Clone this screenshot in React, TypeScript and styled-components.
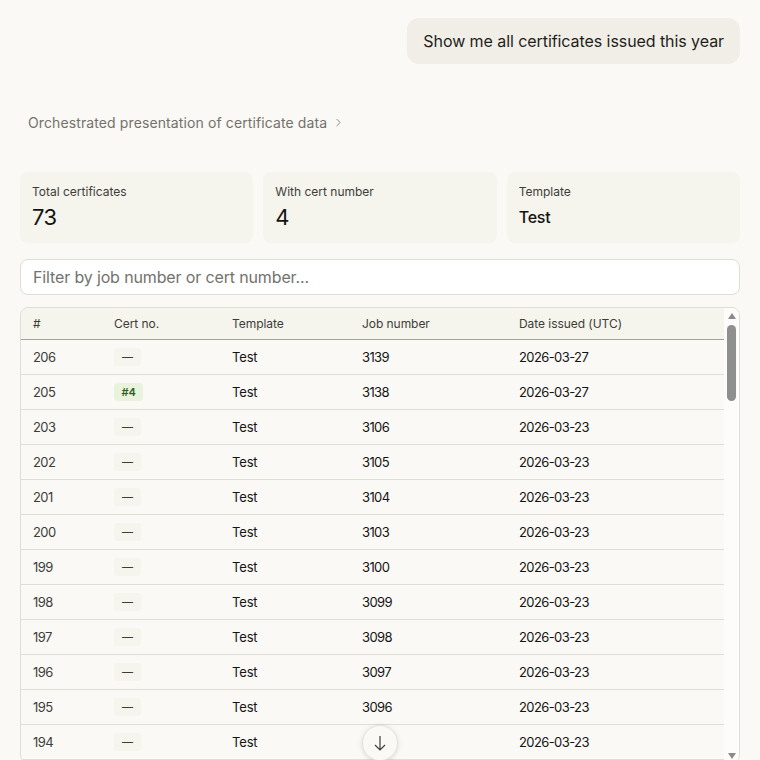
import React from "react";
import styled, { createGlobalStyle } from "styled-components";
import { ChevronRight } from "lucide-react";

const GlobalStyle = createGlobalStyle`
  html, body {
    margin: 0;
    height: 760px;
    overflow: hidden;
    background: #faf9f5;
    font-family: Inter, "Noto Sans", sans-serif;
    color: #1f1e1d;
  }
  * {
    box-sizing: border-box;
  }
`;

const Page = styled.div`
  height: 760px;
  padding: 18px 20px 0;
  display: flex;
  flex-direction: column;
  overflow: hidden;

  & > * {
    flex: none;
  }
`;

const Bubble = styled.div`
  align-self: flex-end;
  height: 46px;
  padding: 0 16px;
  display: flex;
  align-items: center;
  background: #f0eee6;
  border-radius: 12px;
  font-size: 16px;
  letter-spacing: -0.07px;
`;

const Summary = styled.div`
  margin: 48px 0 0 8px;
  height: 20px;
  display: flex;
  align-items: center;
  gap: 5px;
  font-size: 14px;
  letter-spacing: 0.11px;
  color: #73726c;
`;

const Stats = styled.div`
  margin-top: 40px;
  display: grid;
  grid-template-columns: repeat(3, 1fr);
  gap: 10px;
`;

const Stat = styled.div`
  height: 71px;
  padding: 12px 12px 0;
  background: #f5f4ed;
  border-radius: 8px;
`;

const StatLabel = styled.div`
  font-size: 12px;
  line-height: 16px;
  letter-spacing: 0;
  color: #3d3d3a;
`;

const StatValue = styled.div<{ $small?: boolean }>`
  margin-top: 4px;
  height: 26px;
  line-height: 26px;
  font-size: ${(p) => (p.$small ? "16px" : "22px")};
  font-weight: ${(p) => (p.$small ? 500 : 400)};
  letter-spacing: ${(p) => (p.$small ? "-0.2px" : "-0.6px")};
  color: #141413;
`;

const Filter = styled.input`
  margin-top: 16px;
  width: 100%;
  height: 36px;
  padding: 0 12px;
  background: #fff;
  border: 1px solid #deddd6;
  border-radius: 8px;
  outline: none;
  font: inherit;
  font-size: 16px;
  letter-spacing: -0.14px;

  &::placeholder {
    color: #73726c;
    opacity: 1;
  }
`;

const TableFrame = styled.div`
  position: relative;
  margin-top: 12px;
  height: 456px;
  display: flex;
  border: 1px solid #deddd6;
  border-radius: 8px;
  overflow: hidden;
`;

const TableArea = styled.div`
  flex: 1;
  min-width: 0;
  overflow: hidden;
`;

const Table = styled.table`
  width: 100%;
  table-layout: fixed;
  border-collapse: collapse;
  font-size: 13px;
`;

const HeadCell = styled.th`
  height: 31px;
  padding: 0 12px;
  text-align: left;
  font-size: 12px;
  font-weight: 400;
  letter-spacing: -0.05px;
  color: #3d3d3a;
  background: #f5f4ed;
  border-bottom: 1px solid #a3a29b;
`;

const Row = styled.tr`
  height: 35px;
  border-bottom: 1px solid #deddd6;
`;

const Cell = styled.td<{ $muted?: boolean; $numeric?: boolean }>`
  padding: 0 12px;
  letter-spacing: ${(p) => (p.$numeric ? "-0.6px" : "-0.15px")};
  color: ${(p) => (p.$muted ? "#3d3d3a" : "#141413")};
`;

const Pill = styled.span<{ $green?: boolean }>`
  display: inline-flex;
  align-items: center;
  justify-content: center;
  height: 18px;
  min-width: 27px;
  padding: 0 7.5px;
  border-radius: 4px;
  vertical-align: middle;
  font-size: 11px;
  font-weight: ${(p) => (p.$green ? 600 : 400)};
  letter-spacing: 0;
  background: ${(p) => (p.$green ? "#e8f2dc" : "#f5f4ed")};
  color: ${(p) => (p.$green ? "#2f5d1f" : "#3d3d3a")};
`;

const Track = styled.div`
  width: 15px;
  flex: none;
  display: flex;
  flex-direction: column;
  align-items: center;
  background: #fdfcfa;
  padding-top: 5px;
`;

const ArrowUp = styled.div`
  width: 0;
  height: 0;
  border-left: 4.5px solid transparent;
  border-right: 4.5px solid transparent;
  border-bottom: 6px solid #8a8a8a;
`;

const ArrowDownMark = styled(ArrowUp)`
  margin-top: auto;
  margin-bottom: 3px;
  border-bottom: none;
  border-top: 6px solid #8a8a8a;
`;

const Thumb = styled.div`
  margin-top: 6px;
  width: 9px;
  height: 76px;
  border-radius: 5px;
  background: #8f8f8f;
`;

const ScrollButton = styled.button`
  position: absolute;
  left: 341px;
  top: 417px;
  width: 36px;
  height: 36px;
  padding: 0;
  display: flex;
  align-items: center;
  justify-content: center;
  background: #faf9f5;
  color: #3d3d3a;
  border: 1px solid #e4e3dc;
  border-radius: 50%;
  box-shadow: 0 1px 5px rgba(0, 0, 0, 0.12);
`;

type Certificate = {
  id: number;
  cert?: string;
  job: number;
  date: string;
};

const certificates: Certificate[] = [
  { id: 206, job: 3139, date: "2026-03-27" },
  { id: 205, cert: "#4", job: 3138, date: "2026-03-27" },
  { id: 203, job: 3106, date: "2026-03-23" },
  { id: 202, job: 3105, date: "2026-03-23" },
  { id: 201, job: 3104, date: "2026-03-23" },
  { id: 200, job: 3103, date: "2026-03-23" },
  { id: 199, job: 3100, date: "2026-03-23" },
  { id: 198, job: 3099, date: "2026-03-23" },
  { id: 197, job: 3098, date: "2026-03-23" },
  { id: 196, job: 3097, date: "2026-03-23" },
  { id: 195, job: 3096, date: "2026-03-23" },
  { id: 194, job: 3095, date: "2026-03-23" },
];

const App = () => {
  return (
    <>
      <GlobalStyle />
      <Page>
        <Bubble>Show me all certificates issued this year</Bubble>
        <Summary>
          Orchestrated presentation of certificate data
          <ChevronRight size={13} strokeWidth={1.5} />
        </Summary>
        <Stats>
          <Stat>
            <StatLabel>Total certificates</StatLabel>
            <StatValue>73</StatValue>
          </Stat>
          <Stat>
            <StatLabel>With cert number</StatLabel>
            <StatValue>4</StatValue>
          </Stat>
          <Stat>
            <StatLabel>Template</StatLabel>
            <StatValue $small>Test</StatValue>
          </Stat>
        </Stats>
        <Filter placeholder="Filter by job number or cert number..." />
        <TableFrame>
          <TableArea>
            <Table>
              <colgroup>
                <col width={81} />
                <col width={118} />
                <col width={130} />
                <col width={157} />
                <col />
              </colgroup>
              <thead>
                <tr>
                  <HeadCell>#</HeadCell>
                  <HeadCell>Cert no.</HeadCell>
                  <HeadCell>Template</HeadCell>
                  <HeadCell>Job number</HeadCell>
                  <HeadCell>Date issued (UTC)</HeadCell>
                </tr>
              </thead>
              <tbody>
                {certificates.map((c) => (
                  <Row key={c.id}>
                    <Cell $muted $numeric>
                      {c.id}
                    </Cell>
                    <Cell>
                      <Pill $green={!!c.cert}>{c.cert || "—"}</Pill>
                    </Cell>
                    <Cell>Test</Cell>
                    <Cell $numeric>{c.job}</Cell>
                    <Cell $numeric>{c.date}</Cell>
                  </Row>
                ))}
              </tbody>
            </Table>
          </TableArea>
          <Track>
            <ArrowUp />
            <Thumb />
            <ArrowDownMark />
          </Track>
          <ScrollButton aria-label="Scroll to bottom">
            <svg
              width="20"
              height="20"
              viewBox="0 0 20 20"
              fill="none"
              stroke="currentColor"
              strokeWidth="1.2"
            >
              <path d="M10 3v14M5 12l5 5 5-5" />
            </svg>
          </ScrollButton>
        </TableFrame>
      </Page>
    </>
  );
};

export default App;
